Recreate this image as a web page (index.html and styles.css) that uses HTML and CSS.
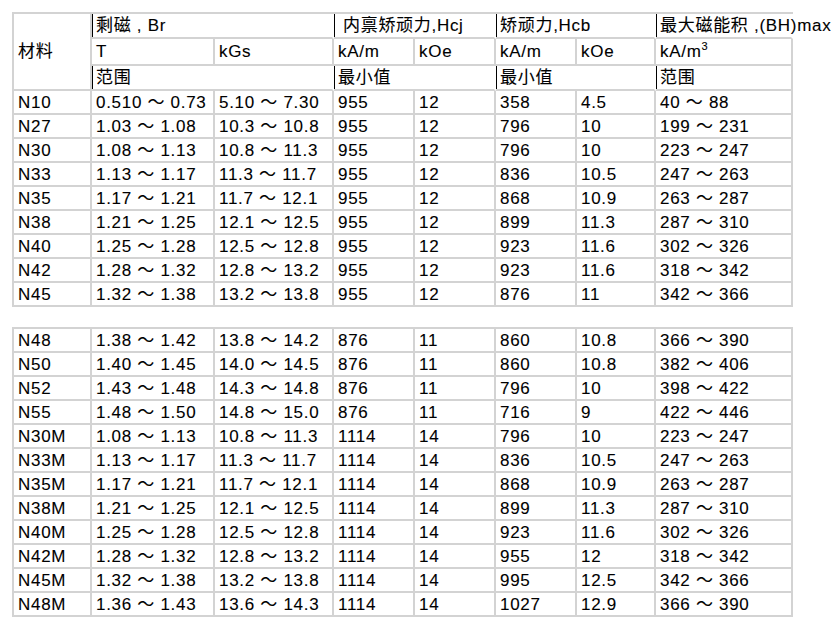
FILE: index.html
```html
<!DOCTYPE html>
<html lang="zh">
<head>
<meta charset="utf-8">
<title>钕铁硼磁性能表</title>
<link rel="stylesheet" href="styles.css">
</head>
<body>
<div class="page">
  <table class="grid">
    <colgroup>
      <col class="c1"><col class="c2"><col class="c3"><col class="c4"><col class="c5"><col class="c6"><col class="c7"><col class="c8">
    </colgroup>
    <tr class="h1">
      <td rowspan="3" class="mat">材料</td>
      <td colspan="2" class="mark pre">剩磁 , Br</td>
      <td colspan="2" class="mark pre sp">内禀矫顽力,Hcj</td>
      <td colspan="2" class="mark pre">矫顽力,Hcb</td>
      <td class="mark over">最大磁能积 ,(BH)max</td>
    </tr>
    <tr class="h2">
      <td>T</td><td>kGs</td><td>kA/m</td><td>kOe</td><td>kA/m</td><td>kOe</td><td>kA/m<sup>3</sup></td>
    </tr>
    <tr class="h3">
      <td colspan="2" class="mark pre">范围</td>
      <td colspan="2" class="mark pre">最小值</td>
      <td colspan="2" class="mark pre">最小值</td>
      <td class="mark">范围</td>
    </tr>
    <tr><td>N10</td><td>0.510 ～ 0.73</td><td>5.10 ～ 7.30</td><td>955</td><td>12</td><td>358</td><td>4.5</td><td>40 ～ 88</td></tr>
    <tr><td>N27</td><td>1.03 ～ 1.08</td><td>10.3 ～ 10.8</td><td>955</td><td>12</td><td>796</td><td>10</td><td>199 ～ 231</td></tr>
    <tr><td>N30</td><td>1.08 ～ 1.13</td><td>10.8 ～ 11.3</td><td>955</td><td>12</td><td>796</td><td>10</td><td>223 ～ 247</td></tr>
    <tr><td>N33</td><td>1.13 ～ 1.17</td><td>11.3 ～ 11.7</td><td>955</td><td>12</td><td>836</td><td>10.5</td><td>247 ～ 263</td></tr>
    <tr><td>N35</td><td>1.17 ～ 1.21</td><td>11.7 ～ 12.1</td><td>955</td><td>12</td><td>868</td><td>10.9</td><td>263 ～ 287</td></tr>
    <tr><td>N38</td><td>1.21 ～ 1.25</td><td>12.1 ～ 12.5</td><td>955</td><td>12</td><td>899</td><td>11.3</td><td>287 ～ 310</td></tr>
    <tr><td>N40</td><td>1.25 ～ 1.28</td><td>12.5 ～ 12.8</td><td>955</td><td>12</td><td>923</td><td>11.6</td><td>302 ～ 326</td></tr>
    <tr><td>N42</td><td>1.28 ～ 1.32</td><td>12.8 ～ 13.2</td><td>955</td><td>12</td><td>923</td><td>11.6</td><td>318 ～ 342</td></tr>
    <tr><td>N45</td><td>1.32 ～ 1.38</td><td>13.2 ～ 13.8</td><td>955</td><td>12</td><td>876</td><td>11</td><td>342 ～ 366</td></tr>
  </table>

  <table class="grid second">
    <colgroup>
      <col class="c1"><col class="c2"><col class="c3"><col class="c4"><col class="c5"><col class="c6"><col class="c7"><col class="c8">
    </colgroup>
    <tr><td>N48</td><td>1.38 ～ 1.42</td><td>13.8 ～ 14.2</td><td>876</td><td>11</td><td>860</td><td>10.8</td><td>366 ～ 390</td></tr>
    <tr><td>N50</td><td>1.40 ～ 1.45</td><td>14.0 ～ 14.5</td><td>876</td><td>11</td><td>860</td><td>10.8</td><td>382 ～ 406</td></tr>
    <tr><td>N52</td><td>1.43 ～ 1.48</td><td>14.3 ～ 14.8</td><td>876</td><td>11</td><td>796</td><td>10</td><td>398 ～ 422</td></tr>
    <tr><td>N55</td><td>1.48 ～ 1.50</td><td>14.8 ～ 15.0</td><td>876</td><td>11</td><td>716</td><td>9</td><td>422 ～ 446</td></tr>
    <tr><td>N30M</td><td>1.08 ～ 1.13</td><td>10.8 ～ 11.3</td><td>1114</td><td>14</td><td>796</td><td>10</td><td>223 ～ 247</td></tr>
    <tr><td>N33M</td><td>1.13 ～ 1.17</td><td>11.3 ～ 11.7</td><td>1114</td><td>14</td><td>836</td><td>10.5</td><td>247 ～ 263</td></tr>
    <tr><td>N35M</td><td>1.17 ～ 1.21</td><td>11.7 ～ 12.1</td><td>1114</td><td>14</td><td>868</td><td>10.9</td><td>263 ～ 287</td></tr>
    <tr><td>N38M</td><td>1.21 ～ 1.25</td><td>12.1 ～ 12.5</td><td>1114</td><td>14</td><td>899</td><td>11.3</td><td>287 ～ 310</td></tr>
    <tr><td>N40M</td><td>1.25 ～ 1.28</td><td>12.5 ～ 12.8</td><td>1114</td><td>14</td><td>923</td><td>11.6</td><td>302 ～ 326</td></tr>
    <tr><td>N42M</td><td>1.28 ～ 1.32</td><td>12.8 ～ 13.2</td><td>1114</td><td>14</td><td>955</td><td>12</td><td>318 ～ 342</td></tr>
    <tr><td>N45M</td><td>1.32 ～ 1.38</td><td>13.2 ～ 13.8</td><td>1114</td><td>14</td><td>995</td><td>12.5</td><td>342 ～ 366</td></tr>
    <tr><td>N48M</td><td>1.36 ～ 1.43</td><td>13.6 ～ 14.3</td><td>1114</td><td>14</td><td>1027</td><td>12.9</td><td>366 ～ 390</td></tr>
  </table>
</div>
</body>
</html>
```

FILE: styles.css
```css
html, body {
  margin: 0;
  padding: 0;
  background: #ffffff;
}

.page {
  padding: 12px 0 0 12px;
  font-family: "Liberation Sans", "Noto Sans CJK SC", sans-serif;
  font-size: 17px;
  letter-spacing: 0.7px;
  color: #000000;
  -webkit-text-stroke: 0.1px #000000;
}

.grid {
  border-collapse: separate;
  border-spacing: 0;
  table-layout: fixed;
  width: 781px;
  border-top: 2px solid #d3d3d3;
  border-left: 2px solid #d3d3d3;
}

.grid col.c1 { width: 78px; }
.grid col.c2 { width: 123px; }
.grid col.c3 { width: 119px; }
.grid col.c4 { width: 81px; }
.grid col.c5 { width: 81px; }
.grid col.c6 { width: 81px; }
.grid col.c7 { width: 79px; }
.grid col.c8 { width: 137px; }

.grid td {
  border-right: 2px solid #d3d3d3;
  border-bottom: 2px solid #d3d3d3;
  padding: 0 0 0 4px;
  height: 24px;
  line-height: 21px;
  white-space: nowrap;
  vertical-align: middle;
  box-sizing: border-box;
}

.grid .h1 td { height: 25px; }
.grid .h2 td { height: 27px; }
.grid .h3 td { height: 25px; }

.grid td.mat { height: auto; }

.grid td.mark {
  box-shadow: inset 1px 0 0 #000000;
}

.grid td.pre { border-right-color: #ffffff; }
.grid td.sp { padding-left: 9px; }

.grid td.over {
  overflow: visible;
  border-right-color: #ffffff;
}

.grid sup {
  font-size: 11px;
  line-height: 0;
  vertical-align: 7px;
  letter-spacing: 0;
}

.second {
  margin-top: 20px;
}
```
